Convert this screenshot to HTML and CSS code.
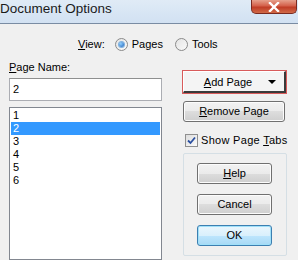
FILE: index.html
```html
<!DOCTYPE html>
<html lang="en">
<head>
    <meta charset="UTF-8">
    <title>Document Options</title>
    <link rel="stylesheet" href="styles.css">
</head>
<body>
    <div class="window">
        <div class="titlebar">
            <span class="title">Document Options</span>
            <div class="close">
                <svg width="14" height="10" viewBox="0 0 14 10">
                    <path d="M3 1 L11 9 M11 1 L3 9" stroke="#fff" stroke-width="2.4" stroke-linecap="square"/>
                </svg>
            </div>
        </div>
        <div class="dialog">
            <div class="view-row">
                <span class="view-label"><u>V</u>iew:</span>
                <label class="radio"><span class="dot on"></span>Pages</label>
                <label class="radio"><span class="dot"></span>Tools</label>
            </div>
            <div class="columns">
                <div class="left">
                    <div class="field-label"><u>P</u>age Name:</div>
                    <div class="textbox">2</div>
                    <div class="listbox">
                        <div class="item">1</div>
                        <div class="item selected">2</div>
                        <div class="item">3</div>
                        <div class="item">4</div>
                        <div class="item">5</div>
                        <div class="item">6</div>
                    </div>
                </div>
                <div class="right">
                    <div class="focus-box">
                        <div class="split-btn">
                            <span class="split-text"><u>A</u>dd Page</span>
                            <span class="arrow"></span>
                        </div>
                    </div>
                    <div class="btn remove-btn"><u>R</u>emove Page</div>
                    <label class="check-row"><span class="checkbox">
                        <svg width="9" height="9" viewBox="0 0 9 9">
                            <path d="M1 4.5 L3.5 7 L8 1.5" fill="none" stroke="#2a4fa0" stroke-width="1.8"/>
                        </svg>
                    </span><span class="check-text">Show Page <u>T</u>abs</span></label>
                    <div class="group">
                        <div class="btn"><u>H</u>elp</div>
                        <div class="btn">Cancel</div>
                        <div class="btn default">OK</div>
                    </div>
                </div>
            </div>
        </div>
    </div>
</body>
</html>
```

FILE: styles.css
```css
body {
    margin: 0;
    padding: 0;
    overflow: hidden;
    font-family: "Liberation Sans", Arial, sans-serif;
    font-size: 11px;
    color: #000;
}
.window {
    width: 298px;
    height: 260px;
    background: #f0f0f0;
    display: flex;
    flex-direction: column;
}
.titlebar {
    height: 23px;
    flex-shrink: 0;
    display: flex;
    justify-content: space-between;
    align-items: flex-start;
    background: linear-gradient(to bottom, #e0ebf6, #d7e5f4 60%, #d2e1f2);
    border-bottom: 1px solid #7a8ca3;
}
.title {
    font-size: 13.5px;
    line-height: 17px;
    color: #1a1a1a;
}
.close {
    width: 44px;
    height: 13px;
    margin-right: 1px;
    border: 1px solid #7a2a20;
    border-top: none;
    border-radius: 0 0 5px 5px;
    background: linear-gradient(to bottom, #e6a08c, #d4604a 45%, #c03c26 55%, #d06a48);
    display: flex;
    justify-content: center;
    align-items: center;
}
.dialog {
    flex: 1;
    padding-top: 13px;
}
.view-row {
    display: flex;
    align-items: center;
    height: 14px;
    padding-left: 78px;
}
.view-label {
    margin-right: 10px;
}
.radio {
    display: flex;
    align-items: center;
    margin-right: 12px;
}
.dot {
    width: 11px;
    height: 11px;
    border: 1px solid #8a8a8a;
    border-radius: 50%;
    background: linear-gradient(135deg, #e4e4e4, #fafafa);
    margin-right: 4px;
    display: flex;
    justify-content: center;
    align-items: center;
}
.dot.on::after {
    content: "";
    width: 5px;
    height: 5px;
    border-radius: 50%;
    background: radial-gradient(circle at 35% 35%, #8fd0ff, #1b5fb8);
    box-shadow: 0 0 0 1px #7fb2e0;
}
.columns {
    display: flex;
    margin-top: 10px;
    padding-left: 9px;
    gap: 20px;
}
.left {
    width: 153px;
    display: flex;
    flex-direction: column;
}
.field-label {
    height: 13px;
    line-height: 13px;
    margin-bottom: 4px;
}
.textbox {
    height: 21px;
    line-height: 21px;
    border: 1px solid #abadb3;
    border-top-color: #8e8f8f;
    background: #fff;
    padding-left: 3px;
    margin-bottom: 6px;
}
.listbox {
    height: 149px;
    border: 1px solid #828790;
    background: #fff;
    padding: 1px;
}
.item {
    height: 13px;
    line-height: 13px;
    padding-left: 2px;
}
.item.selected {
    background: #3399ff;
    color: #fff;
}
.right {
    width: 105px;
    padding-top: 9px;
    display: flex;
    flex-direction: column;
}
.focus-box {
    height: 22px;
    border: 1px solid #d85b5b;
    margin-bottom: 7px;
    display: flex;
}
.split-btn {
    flex: 1;
    display: flex;
    align-items: center;
    background: #f4f4f4;
    border-right: 2px solid #3a3a3a;
    border-bottom: 2px solid #3a3a3a;
    border-left: 1px solid #fff;
    border-top: 1px solid #fff;
}
.split-text {
    flex: 1;
    text-align: center;
    padding-left: 4px;
}
.arrow {
    width: 0;
    height: 0;
    border-left: 4px solid transparent;
    border-right: 4px solid transparent;
    border-top: 4px solid #000;
    margin-right: 8px;
}
.btn {
    height: 19px;
    line-height: 19px;
    text-align: center;
    border: 1px solid #707070;
    border-radius: 3px;
    background: linear-gradient(to bottom, #f2f2f2, #ebebeb 50%, #dddddd 50%, #cfcfcf);
    box-shadow: inset 0 0 0 1px #fcfcfc;
}
.remove-btn {
    width: 100px;
    margin-left: 1px;
}
.check-row {
    display: flex;
    align-items: center;
    height: 14px;
    margin-top: 11px;
    padding-left: 3px;
    white-space: nowrap;
}
.check-text {
    letter-spacing: 0.3px;
    flex-shrink: 0;
}
.checkbox {
    width: 11px;
    height: 11px;
    flex-shrink: 0;
    border: 1px solid #8f8f8f;
    background: linear-gradient(135deg, #dcdcdc, #fbfbfb);
    margin-right: 3px;
    display: flex;
    justify-content: center;
    align-items: center;
}
.group {
    margin-top: 6px;
    margin-left: 1px;
    height: 92px;
    border: 1px solid #d5dfe5;
    border-radius: 2px;
    padding: 9px 15px 0 13px;
    display: flex;
    flex-direction: column;
    gap: 10px;
}
.group .btn {
    width: 73px;
}
.btn.default {
    border-color: #3c7fb1;
    background: linear-gradient(to bottom, #eaf6fd, #d9f0fc 50%, #bee6fd 50%, #a7d9f5);
    box-shadow: inset 0 0 0 1px #9fe0f9;
}
```
